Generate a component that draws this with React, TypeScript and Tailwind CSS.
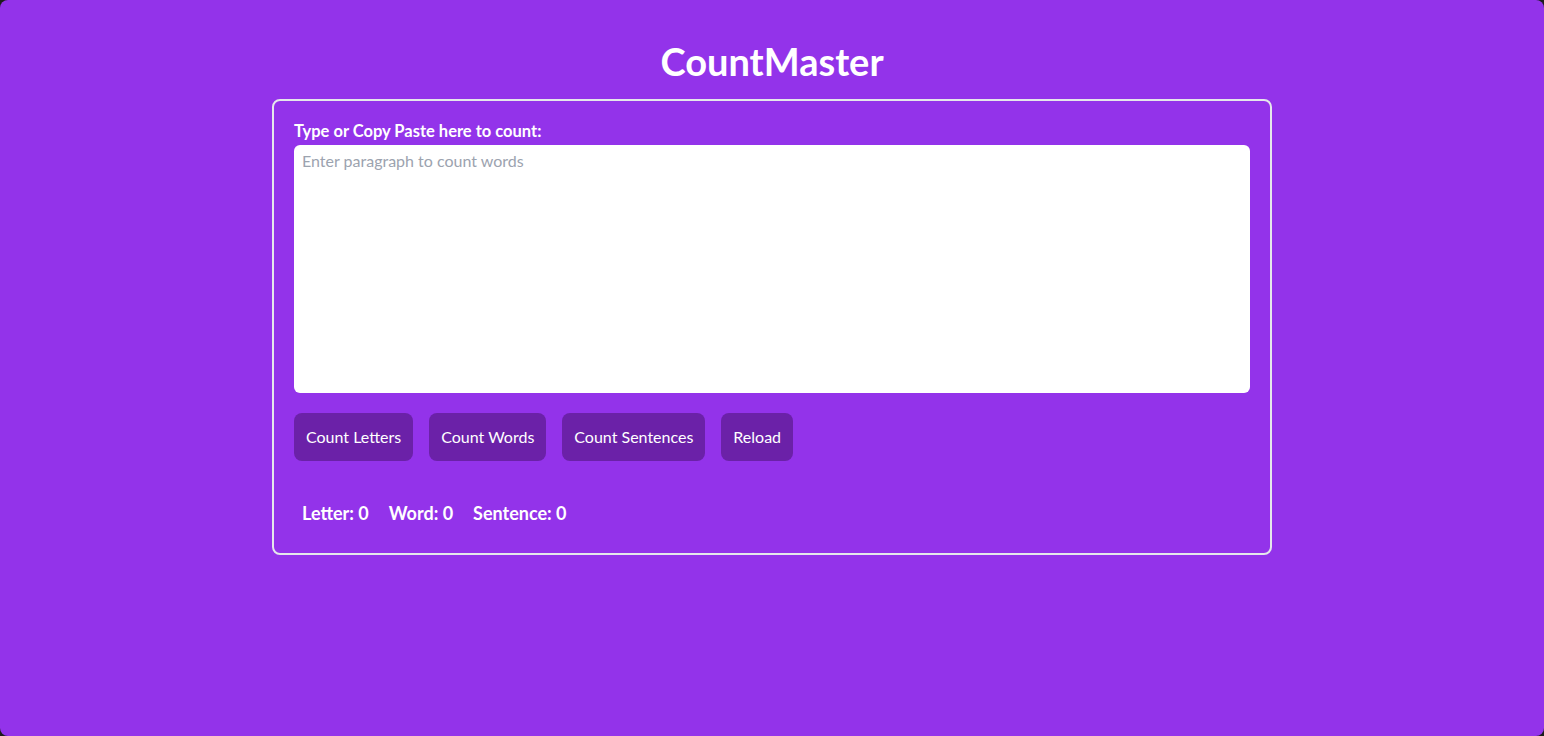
import { useState } from "react";

const App = () => {
  const [text, setText] = useState("");
  const [letters, setLetters] = useState(0);
  const [words, setWords] = useState(0);
  const [sentences, setSentences] = useState(0);

  const countLetters = () => setLetters(text.replace(/\s/g, "").length);
  const countWords = () =>
    setWords(text.trim() ? text.trim().split(/\s+/).length : 0);
  const countSentences = () =>
    setSentences(text.split(/[.!?]+/).filter((s) => s.trim()).length);
  const reload = () => {
    setText("");
    setLetters(0);
    setWords(0);
    setSentences(0);
  };

  const btn =
    "bg-[#6b21a8] text-white text-base px-3 py-3 rounded-lg leading-6";

  return (
    <div className="bg-[#1c1c1c] h-screen font-['Lato','Open_Sans',sans-serif]">
      <div className="bg-[#9333ea] h-full rounded-lg pt-[41px] text-white">
        <h1 className="text-[38px] font-bold text-center leading-10 mb-[18px]">
          CountMaster
        </h1>
        <div className="w-[1000px] mx-auto border-2 border-[#e5e7eb] rounded-lg p-5">
          <label className="block text-[16.5px] font-bold leading-5 mb-1">
            Type or Copy Paste here to count:
          </label>
          <textarea
            value={text}
            onChange={(e) => setText(e.target.value)}
            placeholder="Enter paragraph to count words"
            className="block w-full h-[248px] bg-white text-gray-800 rounded-md px-2 py-1 text-base placeholder:text-[#9ca3af] outline-none resize-none"
          />
          <div className="flex gap-4 mt-5">
            <button className={btn} onClick={countLetters}>
              Count Letters
            </button>
            <button className={btn} onClick={countWords}>
              Count Words
            </button>
            <button className={btn} onClick={countSentences}>
              Count Sentences
            </button>
            <button className={btn} onClick={reload}>
              Reload
            </button>
          </div>
          <div className="flex gap-5 mt-8 px-2 py-[6px] text-lg font-bold leading-7">
            <span>Letter: {letters}</span>
            <span>Word: {words}</span>
            <span>Sentence: {sentences}</span>
          </div>
        </div>
      </div>
    </div>
  );
};

export default App;
